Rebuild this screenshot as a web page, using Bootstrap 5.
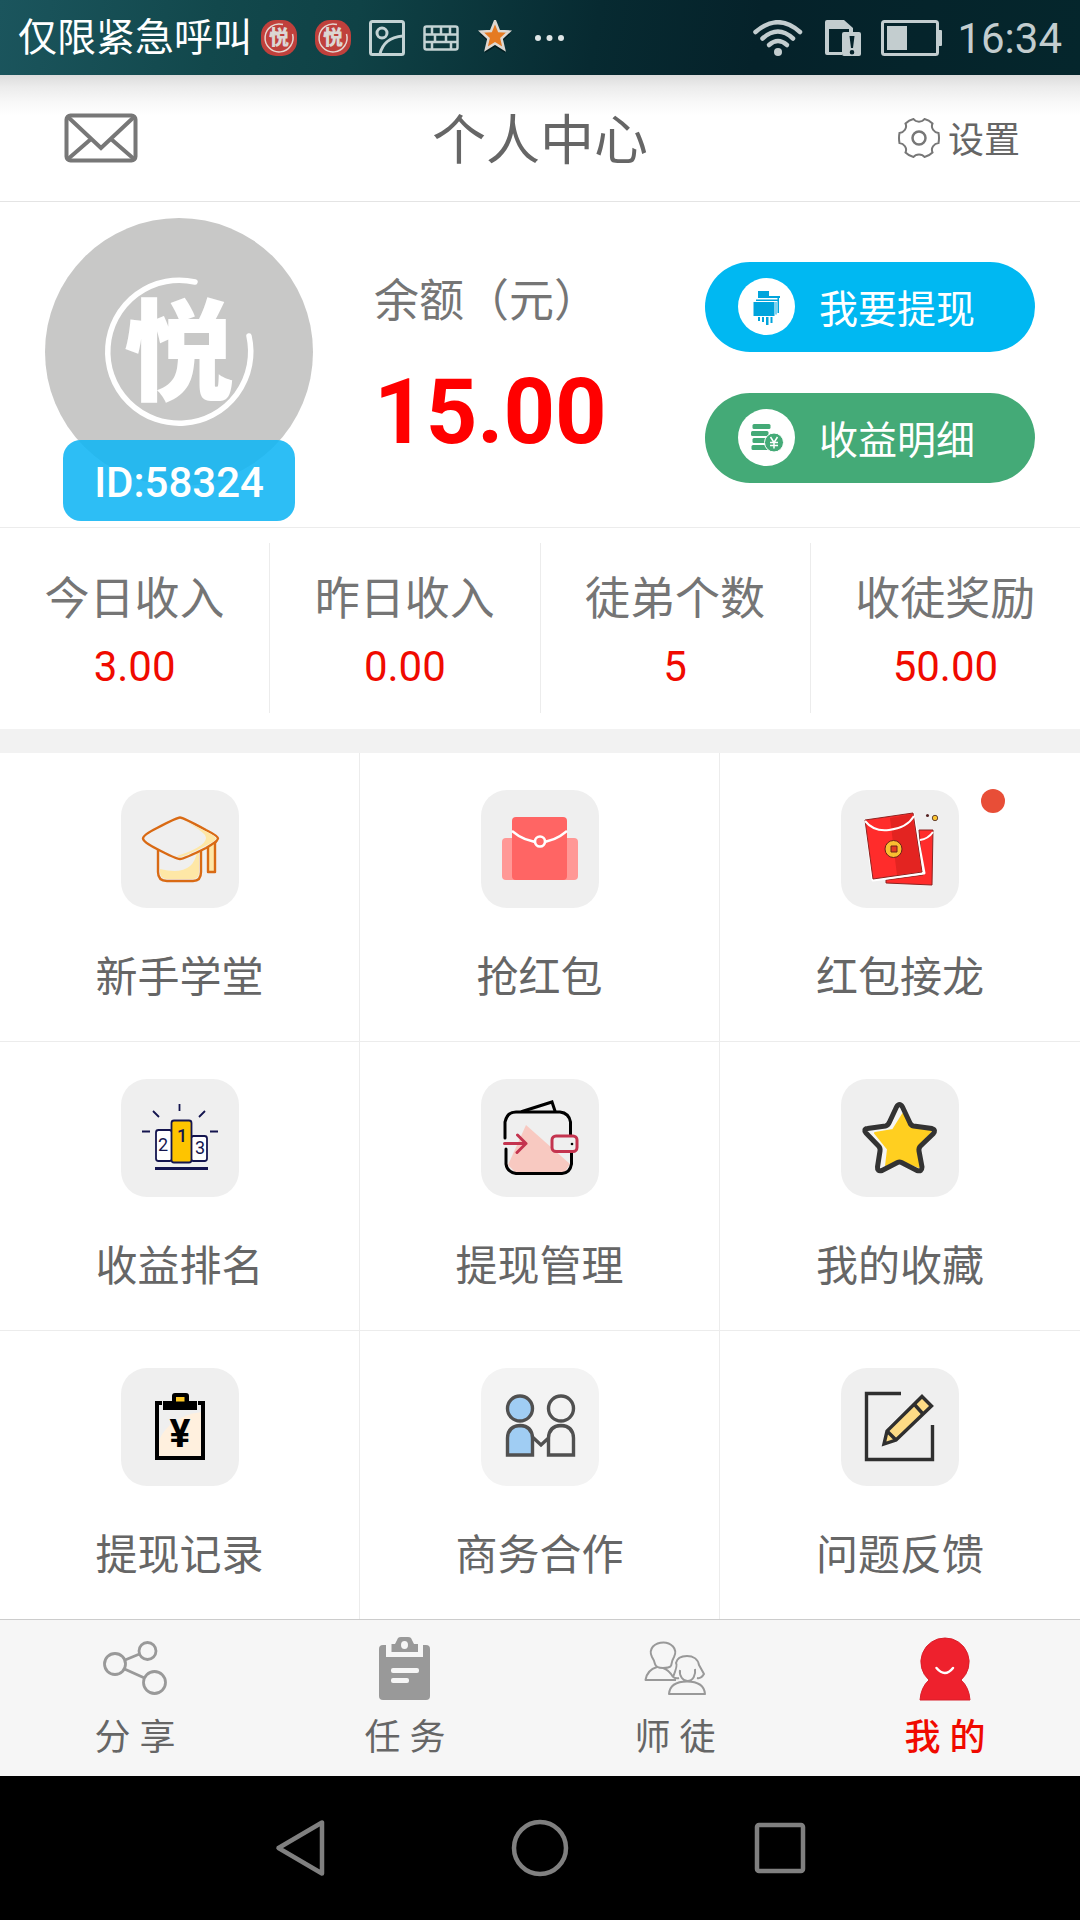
<!DOCTYPE html>
<html lang="zh-CN">
<head>
<meta charset="utf-8">
<meta name="viewport" content="width=device-width, initial-scale=1">
<title>个人中心</title>
<link href="https://cdn.jsdelivr.net/npm/bootstrap@5.3.0/dist/css/bootstrap.min.css" rel="stylesheet">
<style>
  body { font-family: Roboto, "Noto Sans CJK SC", sans-serif; color: #666; background: #fff; }
  a { color: inherit; text-decoration: none; }
  svg { display: block; flex: none; }
  svg text { font-family: Roboto, "Noto Sans CJK SC", sans-serif; }

  .statusbar { background: linear-gradient(100deg, #1b555d 0%, #12484c 20%, #0f4246 33%, #072a31 55%, #05222a 70%, #05262c 100%); padding: 0 18px; line-height: 73px; }
  .carrier { font-size: 39px; color: #fff; margin-right: 9px; padding-top: 2px; }
  .clock { font-size: 42px; color: #c3cdcf; margin-left: 14px; padding-top: 2px; }
  .sys-left { gap: 18px; }
  .sys-right { gap: 20px; }

  .topbar { background: linear-gradient(#dcdcdc 0, #ececec 12px, #f9f9f9 28px, #fff 40px); border-bottom: 1px solid #e4e4e4; padding: 32px 60px; }
  .topbar h1 { font-size: 54px; line-height: 54px; font-weight: 400; padding-top: 8px; }
  .set-link { font-size: 36px; line-height: 48px; gap: 8px; }
  .set-link span { padding-top: 6px; }

  .profile { padding: 16px 45px 6px; border-bottom: 1px solid #ececec; }
  .avatar-box { padding-bottom: 35px; margin-right: 61px; }
  .uid { left: 18px; right: 18px; bottom: 0; border-radius: 18px; background: rgba(16, 181, 244, .88); font-size: 42px; line-height: 77px; padding-top: 4px; font-weight: 500; }
  .balance { padding-top: 57px; color: #757575; font-size: 45px; line-height: 54px; }
  .amount { font-size: 90px; line-height: 90px; margin-top: 39px; color: #f00; }
  .actions { padding-top: 44px; gap: 41px; width: 330px; }
  .act-btn { --bs-btn-color: #fff; --bs-btn-hover-color: #fff; --bs-btn-active-color: #fff; font-size: 39px; line-height: 52px; padding: 16px 33px; border: 0; gap: 23px; }
  .act-btn span { padding-top: 6px; }
  .act-withdraw { background: #00b8f2; }
  .act-income { background: #44aa77; }

  .stats { padding: 15px 0 16px; border-bottom: 24px solid #f2f2f2; }
  .stats > div { padding: 30px 0 22px; }
  .stats > div + div { border-left: 1px solid #ececec; }
  .stats dt { font-size: 45px; line-height: 54px; font-weight: 400; color: #757575; }
  .stats dd { font-size: 42px; line-height: 48px; margin: 16px 0 0; color: #f00a00; }

  .menu-cell { padding: 37px 0 33px; border-right: 1px solid #ececec; border-bottom: 1px solid #ececec; font-size: 42px; line-height: 60px; gap: 40px; }
  .menu-cell:nth-child(3n) { border-right: 0; }
  .menu-cell:nth-child(n+7) { border-bottom: 0; }
  .tile { background: #efefef; border-radius: 26px; }
  .tile-light { background: #f3f3f3; }
  .dot { width: 24px; height: 24px; background: #e84e37; top: 36px; right: 75px; }

  .tabs { background: #f6f6f6; border-top: 1px solid #ccc; }
  .tabs a { padding: 17px 0 17px; gap: 16px; font-size: 36px; line-height: 42px; }
  .tabs .current { color: #f00a00; font-weight: 500; }

  .softkeys { background: #000; gap: 176px; padding: 40px 0; }
  .softkeys button { border: 0; background: none; padding: 0; }
</style>
<script src="https://cdn.jsdelivr.net/npm/bootstrap@5.3.0/dist/js/bootstrap.bundle.min.js"></script>
</head>
<body>

<div class="statusbar d-flex align-items-center">
  <span class="carrier">仅限紧急呼叫</span>
  <div class="sys-left d-flex align-items-center">
    <svg width="36" height="36" viewBox="0 0 36 36" role="img" aria-label="悦"><rect width="36" height="36" rx="15" fill="#c0403c"/><path d="M22 4.500A14 14 0 1 0 31.500 14" fill="none" stroke="#e5d5d0" stroke-width="1.500"/><text x="18" y="25" font-size="20" font-weight="900" text-anchor="middle" fill="#dcd6d4">悦</text></svg>
    <svg width="36" height="36" viewBox="0 0 36 36" role="img" aria-label="悦"><rect width="36" height="36" rx="15" fill="#c0403c"/><path d="M22 4.500A14 14 0 1 0 31.500 14" fill="none" stroke="#e5d5d0" stroke-width="1.500"/><text x="18" y="25" font-size="20" font-weight="900" text-anchor="middle" fill="#dcd6d4">悦</text></svg>
    <svg width="36" height="36" viewBox="0 0 36 36" fill="none" stroke="#c3d3d4" stroke-width="3"><rect x="1.500" y="1.500" width="33" height="33" rx="2"/><circle cx="13" cy="13" r="5"/><path d="M11 34C13 25 20 17 34 16"/></svg>
    <svg width="36" height="26" viewBox="0 0 36 26" fill="none" stroke="#c3d3d4" stroke-width="2.500"><rect x="1.500" y="1.500" width="33" height="23" rx="2"/><path d="M2 9.500H34M2 17H34M9 2V9M18 2V9M27 2V9M12 9V17M23 9V17M9 17V24M28 17V24"/></svg>
    <svg width="36" height="36" viewBox="0 0 36 36"><path d="M18 3L22.500 13.500L33.500 14L25 21.500L28 33L18 27L8 33L11 21.500L2.500 14L13.500 13.500Z" fill="#021518" opacity=".7"/><path d="M18 1L22 11L32 11.500L24.500 18.500L27 29L18 23.500L9 29L11.500 18.500L4 11.500L14 11Z" fill="#e57a22" stroke="#ddd8d2" stroke-width="2.500"/></svg>
    <svg width="36" height="8" viewBox="0 0 36 8" fill="#dfe6e7"><circle cx="7" cy="4" r="3"/><circle cx="18.500" cy="4" r="3"/><circle cx="30" cy="4" r="3"/></svg>
  </div>
  <div class="sys-right d-flex align-items-center ms-auto">
    <svg width="52" height="36" viewBox="0 0 52 36" fill="none" stroke="#c3cdcf" stroke-width="4.500" stroke-linecap="round"><path d="M2.500 12Q25 -7.500 47 12"/><path d="M9.500 18.500Q25 4.500 40 18.500"/><path d="M16 25Q25 17 34 25"/><circle cx="25" cy="32" r="4" fill="#c3cdcf" stroke="none"/></svg>
    <svg width="36" height="36" viewBox="0 0 36 36"><path d="M2 0H19L28 8V13H24V9H4V32H17V35H2Q0 35 0 33V2Q0 0 2 0Z" fill="#c3cdcf"/><rect x="17" y="12" width="19" height="24" rx="2" fill="#c3cdcf"/><path d="M24.500 16H29.500L28 28H26ZM27 30a2.300 2.300 0 1 1 0 4.600a2.300 2.300 0 1 1 0-4.600" fill="#05222a"/></svg>
    <svg width="62" height="36" viewBox="0 0 62 36"><rect x="1.500" y="1.500" width="55" height="33" rx="2" fill="none" stroke="#c3cdcf" stroke-width="3"/><rect x="6" y="6" width="20" height="24" fill="#c3cdcf"/><path d="M57 10H60Q61 10 61 11V25Q61 26 60 26H57Z" fill="#c3cdcf"/></svg>
  </div>
  <span class="clock">16:34</span>
</div>

<header class="topbar d-flex align-items-center">
  <div class="col d-flex"><a href="#" class="ps-1" aria-label="消息">
    <svg width="74" height="50" viewBox="0 0 74 50" fill="none" stroke="#777" stroke-width="4"><rect x="2.500" y="2.500" width="69" height="45" rx="4"/><path d="M4 4L37 35L70 4M4 46L27 26M70 46L47 26"/></svg>
  </a></div>
  <h1 class="mb-0">个人中心</h1>
  <div class="col d-flex justify-content-end"><a href="#" class="set-link d-flex align-items-center">
    <svg width="42" height="42" viewBox="-21 -21 42 42" fill="none" stroke="#777" stroke-width="2"><path d="M19.500 -5Q20.500 0 19.500 5C15 5.500 11.500 10 13.500 14.500Q10 18 5.500 19C3 15.500 -3 15.500 -5.500 19Q-10 18 -13.500 14.500C-11.500 10 -15 5.500 -19.500 5Q-20.500 0 -19.500 -5C-15 -5.500 -11.500 -10 -13.500 -14.500Q-10 -18 -5.500 -19C-3 -15.500 3 -15.500 5.500 -19Q10 -18 13.500 -14.500C11.500 -10 15 -5.500 19.500 -5Z"/><circle r="6.500" stroke-width="2.500"/></svg>
    <span>设置</span></a></div>
</header>

<main>
  <section class="profile d-flex align-items-start">
    <div class="avatar-box position-relative">
      <svg width="268" height="268" viewBox="0 0 268 268" role="img" aria-label="悦"><circle cx="134" cy="134" r="134" fill="#c8c8c7"/><path d="M150 64A71.500 71.500 0 1 0 204 118" fill="none" stroke="#fff" stroke-width="5.500" stroke-linecap="round"/><text x="134" y="174" font-size="110" font-weight="900" text-anchor="middle" fill="#fff">悦</text></svg>
      <span class="uid position-absolute text-white text-center">ID:58324</span>
    </div>
    <div class="balance">
      <div>余额（元）</div>
      <div class="amount fw-bold">15.00</div>
    </div>
    <div class="actions d-flex flex-column ms-auto">
      <button type="button" class="btn act-btn act-withdraw rounded-pill d-flex align-items-center">
        <svg width="58" height="58" viewBox="0 0 58 58"><circle cx="28.500" cy="28.500" r="28.500" fill="#fff"/><path d="M20 13H31V18H42V20H20ZM18 21.500H40V23H18ZM15.500 24H36.500V38H15.500ZM37.500 24H38.500V36.500H37.500ZM39.500 20H41V35H39.500ZM20 39H22V43H20ZM24 39H26V44H24ZM28 39H30.500V47H28ZM32.500 39H34.500V45H32.500Z" fill="#00a4dc"/></svg>
        <span>我要提现</span></button>
      <button type="button" class="btn act-btn act-income rounded-pill d-flex align-items-center">
        <svg width="58" height="58" viewBox="0 0 58 58" fill="#44aa77"><circle cx="28.500" cy="28.500" r="28.500" fill="#fff"/><rect x="14.500" y="15" width="18" height="5" rx="1.500"/><rect x="13" y="22" width="17.500" height="5" rx="1.500"/><rect x="14.500" y="29" width="15" height="5" rx="1.500"/><rect x="13.500" y="36" width="17" height="5" rx="1.500"/><circle cx="36" cy="33.500" r="9.500" stroke="#fff"/><path d="M32.500 28L36 33.500L39.500 28M36 33.500V39.500M32 33.500H40M32 36.500H40" fill="none" stroke="#fff" stroke-width="1.500"/></svg>
        <span>收益明细</span></button>
    </div>
  </section>

  <dl class="stats row g-0 mb-0 text-center">
    <div class="col"><dt>今日收入</dt><dd>3.00</dd></div>
    <div class="col"><dt>昨日收入</dt><dd>0.00</dd></div>
    <div class="col"><dt>徒弟个数</dt><dd>5</dd></div>
    <div class="col"><dt>收徒奖励</dt><dd>50.00</dd></div>
  </dl>

  <nav class="row row-cols-3 g-0" aria-label="功能">
    <a href="#" class="menu-cell d-flex flex-column align-items-center">
      <svg class="tile" width="118" height="118" viewBox="0 0 118 118" stroke="#d96a14" stroke-width="2.400" stroke-linejoin="round"><path d="M37 58V82Q37 91 46 91H72Q80 91 80 82V58" fill="#efefef"/><path d="M39 79Q72 87 76 62H78V82Q78 89 72 89H46Q39 89 39 82Z" fill="#fee7a6" stroke="none"/><path d="M87 55V82H94V53L96 50" fill="#fee7a6"/><path d="M59 27.500Q62 27.500 85 40Q97 46 97 48.500Q97 51 85 58Q63 69 59 69Q55 69 36 59Q22 52 22 48.500Q22 45 36 38Q56 27.500 59 27.500Z" fill="#efefef"/><path d="M64 31L84 41Q95 46 95 49Q93 52 84 56Q63 67 59 67Q57 67 56 66Q90 55 84 45Q80 40 64 31Z" fill="#fee7a6" stroke="none"/></svg>
      新手学堂</a>
    <a href="#" class="menu-cell d-flex flex-column align-items-center">
      <svg class="tile" width="118" height="118" viewBox="0 0 118 118"><rect x="21" y="48" width="76" height="42" rx="4" fill="#ff9896"/><rect x="31" y="27" width="55" height="63" rx="4" fill="#ff6564"/><path d="M31 41Q44 52 59 52Q73 52 86 41" fill="none" stroke="#fff" stroke-width="2.400"/><circle cx="59" cy="51.500" r="5" fill="#ff6564" stroke="#fff" stroke-width="2.600"/></svg>
      抢红包</a>
    <a href="#" class="menu-cell d-flex flex-column align-items-center position-relative">
      <svg class="tile" width="118" height="118" viewBox="0 0 118 118" stroke-linejoin="round"><path d="M78 40H92L91 95L45 93V90L82 85Z" fill="#ff2c2b" stroke="#8c2320"/><path d="M79 50Q87 49 92 42" fill="none" stroke="#fff" stroke-width="2"/><path d="M25 31L72 24L83 83L32 90Z" fill="none" stroke="#fff" stroke-width="3"/><path d="M24 30L72 23L81 82L32 89Z" fill="#ff2c2b" stroke="#8c2320"/><path d="M49 28L71 24L80.500 81.500L56 85Z" fill="#e32421"/><path d="M24 31Q33 42 48 40Q66 38 73 26" fill="none" stroke="#fff" stroke-width="2"/><circle cx="52.500" cy="59" r="8.500" fill="#f9bf31" stroke="#6e2318"/><rect x="50" y="56" width="6" height="6" fill="#e33a22" stroke="#6e2318"/><circle cx="86.500" cy="25.500" r="1.500" fill="#522"/><circle cx="94" cy="28" r="2.700" fill="#fbc531" stroke="#643"/></svg>
      <span class="dot rounded-circle position-absolute"></span>
      红包接龙</a>
    <a href="#" class="menu-cell d-flex flex-column align-items-center">
      <svg class="tile" width="118" height="118" viewBox="0 0 118 118" stroke="#14154f" stroke-width="1.800"><rect x="35" y="51" width="16" height="31" rx="2.500" fill="#fff"/><rect x="70" y="57" width="16" height="25" rx="2.500" fill="#fff"/><rect x="50.500" y="41.500" width="20" height="42" rx="2.500" fill="#fec400"/><path d="M34 89.500H87" stroke-width="3"/><path d="M58.500 25V32M32 32L38 38M84 32L78 38M21 52.500H29M89 52.500H97"/><g fill="#14154f" stroke="none" font-size="18" text-anchor="middle"><text x="42" y="72">2</text><text x="61" y="63" font-weight="500">1</text><text x="79" y="75">3</text></g></svg>
      收益排名</a>
    <a href="#" class="menu-cell d-flex flex-column align-items-center">
      <svg class="tile" width="118" height="118" viewBox="0 0 118 118" fill="none" stroke="#000" stroke-width="3" stroke-linecap="round" stroke-linejoin="round"><path d="M45 46L89 85L84 93H34L27 86Z" fill="#f8c9c1" stroke="none"/><path d="M24 59V43Q26 33 35 33H79Q88 34 89.500 43V57M90.500 73V85Q89 94 81 94.500H35Q26 93 25 85V70"/><path d="M41 32.500L71 23L74 32" stroke-linejoin="miter"/><g stroke="#c4344f"><rect x="71" y="57" width="25" height="15.500" rx="4" fill="#efefef"/><path d="M23.500 64.500H45M36.500 56L45 64.500L36 73.500"/></g><circle cx="91" cy="65" r="1.300" fill="#000" stroke="none"/></svg>
      提现管理</a>
    <a href="#" class="menu-cell d-flex flex-column align-items-center">
      <svg class="tile" width="118" height="118" viewBox="0 0 118 118" stroke-linejoin="round"><path d="M58.500 27L69 47L92.500 50.500L77 67.500L80 91L58.500 81.500L37 91L40 68L24.500 51L48 47Z" fill="#f5f5f3"/><path d="M62 35L68 49L90 52L76 67L78 88L58.500 80L45 87L47 70L34 54L52 51Z" fill="#ffcf20" stroke="#ffcf20" stroke-width="2"/><path d="M55.500 28Q58.500 23 61.500 28L69 44Q70 46.500 72.500 47L91 49.500Q95.500 51 92 55L79.500 67Q77.500 69 78 72L81 88Q81 93 76 91.500L60.500 83.500Q58.500 82.500 56.500 83.500L41 91.500Q36 93 36.500 88L39 72Q39.500 69 37.500 67L25 54Q22 50 26.500 49.500L44.500 47Q47 46.500 48.500 43Z" fill="none" stroke="#333" stroke-width="5"/></svg>
      我的收藏</a>
    <a href="#" class="menu-cell d-flex flex-column align-items-center">
      <svg class="tile" width="118" height="118" viewBox="0 0 118 118"><path d="M38 89V72Q49 48 81 44V89Z" fill="#fff0de"/><path d="M41 35H36V90H82V35H77" fill="none" stroke="#000" stroke-width="4"/><path d="M42 33H51V28Q51 25 54 25H65Q68 25 68 28V33H76V42H42Z" fill="#000"/><path d="M55 29H63.500V33.500H55Z" fill="#ffc928"/><text x="59" y="79" font-size="39" font-weight="700" text-anchor="middle" fill="#000">¥</text></svg>
      提现记录</a>
    <a href="#" class="menu-cell d-flex flex-column align-items-center">
      <svg class="tile tile-light" width="118" height="118" viewBox="0 0 118 118" fill="none" stroke="#505050" stroke-width="3.400"><circle cx="39" cy="40.500" r="12.500" fill="#a0cdf3"/><circle cx="80" cy="40.500" r="12.500"/><path d="M26.500 87V70Q27 58 39 57.500Q51 58 51.500 70V87Z" fill="#a0cdf3"/><path d="M67.500 87V70Q68 58 80 57.500Q92 58 92.500 70V87ZM52 69.500L60 77L67.500 70"/></svg>
      商务合作</a>
    <a href="#" class="menu-cell d-flex flex-column align-items-center">
      <svg class="tile" width="118" height="118" viewBox="0 0 118 118" fill="none" stroke="#2f2f2f" stroke-width="3.400"><path d="M60 25.500H25.500V91.500H91.500V57"/><path d="M81 28.500L90.500 38L55 72L43 76L46 63Z" fill="#fddb85"/><path d="M73.500 36.500L82 46M46 63L55 72"/></svg>
      问题反馈</a>
  </nav>
</main>

<nav class="tabs row row-cols-4 g-0" aria-label="主导航">
  <a href="#" class="d-flex flex-column align-items-center">
    <svg width="64" height="64" viewBox="0 0 64 64" fill="none" stroke="#999" stroke-width="2.800"><circle cx="12" cy="27" r="10.500"/><circle cx="44.500" cy="14" r="8.500"/><circle cx="51.500" cy="45.500" r="11"/><path d="M22 23L36.500 17M21.500 32L41.500 41"/></svg>
    分 享</a>
  <a href="#" class="d-flex flex-column align-items-center">
    <svg width="64" height="64" viewBox="0 0 64 64"><path d="M10 8H53Q57 8 57 12V59Q57 63 53 63H10Q6 63 6 59V12Q6 8 10 8Z" fill="#999"/><path d="M13 7H50V20H13Z" fill="#f6f6f6"/><path d="M18.500 15V7H22L25 1Q26 0 28 0H35Q37 0 38 1L41 7H45V15Z" fill="#999"/><ellipse cx="31.500" cy="8" rx="3.500" ry="4" fill="#f6f6f6"/><rect x="18" y="31" width="28" height="5" rx="2" fill="#f6f6f6"/><rect x="18" y="41" width="18" height="5" rx="2" fill="#f6f6f6"/></svg>
    任 务</a>
  <a href="#" class="d-flex flex-column align-items-center">
    <svg width="64" height="64" viewBox="0 0 64 64" fill="none" stroke="#999" stroke-width="2" stroke-linejoin="round"><path d="M28 29Q29 23 31 20Q34 14 30 9.500Q26 5.500 20.500 5.500Q14 5.500 10 9.500Q6 14 9 20Q11 23 12 27Q13 31 20 31Q26 31 28 29"/><path d="M14 30Q4 33 2.500 43H33"/><path d="M30 40Q35 28 33 26C34 21 39 19 44 19C50 19 55 22 56 28L61 37Q58 42 54 41M30 40Q26 33 20 31M30 40Q33 42 36 41M37 33C36 39 40 44 44.500 44C50 44 53 38 52 32M26 57Q27 44.500 44 44.500Q61 44.500 62 57Z"/></svg>
    师 徒</a>
  <a href="#" class="current d-flex flex-column align-items-center" aria-current="page">
    <svg width="64" height="64" viewBox="0 0 64 64"><path d="M32 1A24 24 0 0 1 48 43Q56 50 57 63H7Q8 50 16 43A24 24 0 0 1 32 1Z" fill="#ee212d" stroke="#d91e2a"/><path d="M23.500 31Q32 41 40 31" fill="none" stroke="#fff" stroke-width="2.500" stroke-linecap="round"/></svg>
    我 的</a>
</nav>

<div class="softkeys d-flex justify-content-center">
  <button type="button" aria-label="返回"><svg width="64" height="64" viewBox="0 0 64 64" fill="none" stroke="#808080" stroke-width="4.500" stroke-linejoin="round"><path d="M54 6.500V57.500L10.500 32Z"/></svg></button>
  <button type="button" aria-label="主屏幕"><svg width="64" height="64" viewBox="0 0 64 64" fill="none" stroke="#808080" stroke-width="4.500"><circle cx="32" cy="32" r="26"/></svg></button>
  <button type="button" aria-label="最近任务"><svg width="64" height="64" viewBox="0 0 64 64" fill="none" stroke="#808080" stroke-width="4.500"><rect x="9" y="9" width="46" height="46" rx="2"/></svg></button>
</div>

</body>
</html>
